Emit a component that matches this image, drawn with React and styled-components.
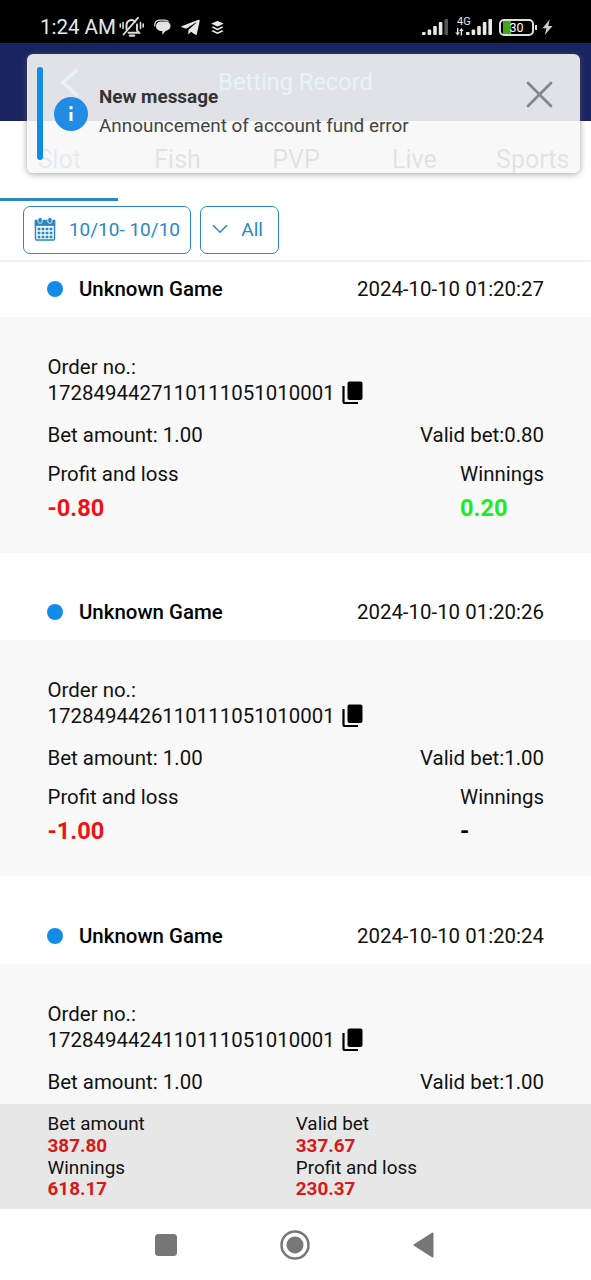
import React from 'react';
import styled, { createGlobalStyle } from 'styled-components';
import { FaBuffer, FaTelegramPlane } from 'react-icons/fa';

const records = [
	{ id: '1728494427110111051010001', time: '2024-10-10 01:20:27', bet: '1.00', valid: '0.80', profit: '-0.80', winnings: '0.20' },
	{ id: '1728494426110111051010001', time: '2024-10-10 01:20:26', bet: '1.00', valid: '1.00', profit: '-1.00', winnings: '-' },
	{ id: '1728494424110111051010001', time: '2024-10-10 01:20:24', bet: '1.00', valid: '1.00' },
];

const totals = [
	{ label: 'Bet amount', value: '387.80' },
	{ label: 'Valid bet', value: '337.67' },
	{ label: 'Winnings', value: '618.17' },
	{ label: 'Profit and loss', value: '230.37' },
];

const tabs = ['Slot', 'Fish', 'PVP', 'Live', 'Sports'];

const MutedBell = () => (
	<svg width='26' height='22' viewBox='0 0 26 22' fill='none' stroke='#ddd' strokeWidth='1.9' strokeLinecap='round'>
		<path d='M7.5 13V9a5 5 0 0 1 8.5-3.5M18 8.5v6l2 2.2H9.5' />
		<path d='M4.5 18.5 19 1.8' />
		<path d='M10.8 19.6h4.4' strokeWidth='2.2' />
		<path d='M4 6.5v6M1.3 8v3M21.5 6.5v6M24.2 8v3' strokeWidth='1.6' />
	</svg>
);

const ChatBubble = () => (
	<svg width='17' height='17' viewBox='0 0 17 17' fill='#e4e4e4'>
		<path d='M.9 7.5C.3 3.5 2.2 1.3 5.5 1.2h5.2c1.7 0 3 .5 3.9 1.5' fill='none' stroke='#ddd' strokeWidth='1.2' />
		<path d='M7 2.6h4c3.5 0 5.5 1.9 5.5 4.5 0 2.8-2 4.5-4.9 4.9L8.3 15.8v-3.7C4.4 12.1 2 10.2 2 7.3c0-2.9 2-4.7 5-4.7Z' />
	</svg>
);

const Signal = ({ dim }) => (
	<svg width='26' height='18' viewBox='0 0 26 18' fill='#e8e8e8'>
		<rect x='0' y='14' width='3.6' height='3' rx='1' />
		<rect x='5.6' y='11.5' width='3.6' height='5.5' rx='1' />
		<rect x='11.2' y='8' width='3.6' height='9' rx='1' />
		<rect x='16.8' y='4' width='3.6' height='13' rx='1' />
		<rect x='22.4' y='1' width='3.6' height='16' rx='1' fill={dim ? '#555' : '#e8e8e8'} />
	</svg>
);

const DataArrows = () => (
	<svg width='9' height='8' viewBox='0 0 9 8' fill='#e8e8e8'>
		<path d='M2 0h1.4v4.5H5L2.7 7.5.3 4.5H2ZM5.7 7.5V3H4.2L6.4 0l2.3 3H7.1v4.5Z' />
	</svg>
);

const Bolt = () => (
	<svg width='11' height='17' viewBox='0 0 11 17' fill='#ccc'>
		<path d='M7.7.5.5 9.2h4L2.8 16l7.7-8.9H6.3Z' />
	</svg>
);

const CalendarIcon = () => (
	<svg width='22' height='24' viewBox='0 0 22 24'>
		<path d='M1.5 3.5h19V22a1 1 0 0 1-1 1h-17a1 1 0 0 1-1-1Z' fill='#fff' stroke='#2a88c4' strokeWidth='1.5' />
		<path d='M.8 3.5h20.4v5.4H.8Z' fill='#2a88c4' />
		<rect x='4' y='.4' width='4.2' height='6' rx='2.1' fill='#2a88c4' stroke='#fff' strokeWidth='.8' />
		<rect x='13.8' y='.4' width='4.2' height='6' rx='2.1' fill='#2a88c4' stroke='#fff' strokeWidth='.8' />
		{[10.7, 14.7, 18.7].map((y) => [3.6, 7.6, 11.6, 15.6].map((x) => <rect key={`${x}-${y}`} x={x} y={y} width='2.8' height='2.6' fill='#2a88c4' />))}
	</svg>
);

const CopyIcon = () => (
	<svg width='21' height='24' viewBox='0 0 21 24'>
		<rect x='5.5' y='.5' width='15' height='18.5' rx='2' />
		<path d='M1.5 5v15.5a1.5 1.5 0 0 0 1.5 1.5h13' fill='none' stroke='#000' strokeWidth='2.2' />
	</svg>
);

const Record = ({ record }) => (
	<article>
		<RecordHead>
			<Dot />
			<GameName>Unknown Game</GameName>
			<time>{record.time}</time>
		</RecordHead>
		<RecordBody>
			<OrderLabel>Order no.:</OrderLabel>
			<OrderLine>
				{record.id}
				<CopyIcon />
			</OrderLine>
			<BetRow>
				<span>Bet amount: {record.bet}</span>
				<span>Valid bet:{record.valid}</span>
			</BetRow>
			{record.profit && (
				<ResultRow>
					<div>
						Profit and loss
						<Amount $color='#f01212'>{record.profit}</Amount>
					</div>
					<div>
						Winnings
						<Amount $color={record.winnings === '-' ? '#000' : '#18ef20'}>{record.winnings}</Amount>
					</div>
				</ResultRow>
			)}
		</RecordBody>
	</article>
);

const App = () => {
	return (
		<Screen>
			<GlobalStyle />
			<StatusBar>
				<Clock>1:24 AM</Clock>
				<Notices>
					<MutedBell />
					<ChatBubble />
					<FaTelegramPlane size={21} />
					<FaBuffer size={15} />
				</Notices>
				<Signal dim />
				<Network>
					<small>4G</small>
					<DataArrows />
				</Network>
				<Signal />
				<Battery>
					<span>30</span>
				</Battery>
				<Bolt />
			</StatusBar>
			<Header>
				<svg width='20' height='29' viewBox='0 0 20 29' fill='none' stroke='#40dcec' strokeWidth='3.5'>
					<path d='M17.5 1.5 3 14.5l14.5 13' />
				</svg>
				<h1>Betting Record</h1>
			</Header>
			<Tabs>
				{tabs.map((tab, i) => (
					<Tab key={tab} $active={i === 0}>
						{tab}
					</Tab>
				))}
			</Tabs>
			<Filters>
				<FilterButton $width='168px' $padding='0 10px 2px'>
					<CalendarIcon />
					<span>10/10- 10/10</span>
				</FilterButton>
				<FilterButton $width='79px' $padding='0 15px 2px 11px'>
					<svg width='16' height='10' viewBox='0 0 16 10' fill='none' stroke='#2a88c4' strokeWidth='1.6'>
						<path d='m1 1.2 7 7 7-7' />
					</svg>
					<span>All</span>
				</FilterButton>
			</Filters>
			<List>
				{records.map((record) => (
					<Record key={record.id} record={record} />
				))}
			</List>
			<Summary>
				{totals.map((item) => (
					<div key={item.label}>
						{item.label}
						<strong>{item.value}</strong>
					</div>
				))}
			</Summary>
			<NavBar>
				<svg width='22' height='22' viewBox='0 0 22 22'>
					<rect width='22' height='22' rx='3.5' fill='#777' />
				</svg>
				<svg width='30' height='30' viewBox='0 0 30 30'>
					<circle cx='15' cy='15' r='13.5' fill='none' stroke='#777' strokeWidth='2.5' />
					<circle cx='15' cy='15' r='8.5' fill='#777' />
				</svg>
				<svg width='21' height='26' viewBox='0 0 21 26'>
					<path d='M19.5 1.5v23L1.5 13Z' fill='#777' stroke='#777' strokeWidth='2' strokeLinejoin='round' />
				</svg>
			</NavBar>
			<Toast>
				<ToastBar />
				<InfoBadge>
					<svg width='34' height='34' viewBox='0 0 34 34'>
						<circle cx='17' cy='17' r='17' fill='#228be6' />
						<path d='M17 9.3v3M17 15v9' stroke='#fff' strokeWidth='3' />
					</svg>
				</InfoBadge>
				<ToastText>
					<strong>New message</strong>
					<p>Announcement of account fund error</p>
				</ToastText>
				<svg width='27' height='27' viewBox='0 0 27 27' stroke='#85868a' strokeWidth='2.8' strokeLinecap='round'>
					<path d='m2 2 23 23M25 2 2 25' />
				</svg>
			</Toast>
		</Screen>
	);
};

const GlobalStyle = createGlobalStyle`
	* {
		box-sizing: border-box;
	}
	body {
		margin: 0;
		background: #fff;
		font-family: Roboto, sans-serif;
		color: #111;
	}
	svg {
		display: block;
		flex-shrink: 0;
	}
`;

const Screen = styled.main`
	position: relative;
	display: flex;
	flex-direction: column;
	width: 591px;
	height: 1280px;
	overflow: hidden;
	background: #fff;
`;

const StatusBar = styled.div`
	display: flex;
	align-items: center;
	flex-shrink: 0;
	height: 43px;
	padding: 11px 38px 0 40px;
	background: #000;
	color: #e8e8e8;
`;

const Clock = styled.span`
	width: 79px;
	font-size: 20.5px;
	white-space: nowrap;
`;

const Notices = styled.div`
	display: flex;
	align-items: center;
	gap: 9px;
	margin-right: auto;
`;

const Network = styled.div`
	display: flex;
	flex-direction: column;
	width: 11px;
	margin: -2px 0 0 7px;

	small {
		padding-left: 2px;
		font-size: 11px;
		line-height: 12px;
		white-space: nowrap;
	}
`;

const Battery = styled.div`
	position: relative;
	width: 35px;
	height: 17px;
	margin: 0 8px 0 7px;
	border: 2px solid #ddd;
	border-radius: 5px;
	background: linear-gradient(90deg, #000 2px, #43a51a 2px 10px, #000 10px);
	font-size: 12.5px;
	line-height: 14px;
	text-align: center;
	color: #fff;

	&::after {
		content: '';
		position: absolute;
		top: 4px;
		right: -5px;
		width: 2px;
		height: 5px;
		background: #ddd;
	}
`;

const Header = styled.header`
	display: grid;
	grid-template-columns: 80px 1fr 80px;
	align-items: center;
	flex-shrink: 0;
	height: 78px;
	background: #192560;

	svg {
		justify-self: end;
	}

	h1 {
		margin: 0;
		font-size: 23.6px;
		font-weight: 400;
		text-align: center;
		color: #40dcec;
	}
`;

const Tabs = styled.nav`
	display: grid;
	grid-template-columns: repeat(5, 118.4px);
	flex-shrink: 0;
	height: 80px;
	overflow: hidden;
`;

const Tab = styled.div`
	display: flex;
	align-items: center;
	justify-content: center;
	border-bottom: 3px solid ${({ $active }) => ($active ? '#2a88c4' : 'transparent')};
	font-size: 25px;
	color: ${({ $active }) => ($active ? '#2a88c4' : '#222')};
`;

const Filters = styled.div`
	display: flex;
	gap: 9px;
	flex-shrink: 0;
	height: 60px;
	padding: 5px 23px;
	border-bottom: 1px solid #eee;
	box-shadow: 0 1px 2px rgba(0, 0, 0, 0.06);
`;

const FilterButton = styled.button`
	display: flex;
	align-items: center;
	justify-content: space-between;
	width: ${({ $width }) => $width};
	height: 48px;
	padding: ${({ $padding }) => $padding};
	border: 1px solid #2a88c4;
	border-radius: 7px;
	background: #fff;
	font-family: inherit;
	font-size: 19px;
	white-space: nowrap;
	color: #2a88c4;
`;

const List = styled.section`
	flex: 1;
	min-height: 0;
	overflow: hidden;
	font-size: 20.45px;
`;

const RecordHead = styled.div`
	display: flex;
	align-items: center;
	height: 56px;
	padding: 0 47px;
`;

const Dot = styled.i`
	width: 16px;
	height: 16px;
	margin-right: 16px;
	border-radius: 50%;
	background: #138be8;
`;

const GameName = styled.b`
	flex: 1;
	font-weight: 500;
	color: #000;
`;

const RecordBody = styled.div`
	height: 235.5px;
	margin-bottom: 31.8px;
	padding: 37px 47px 0 47.5px;
	background: #f8f8f8;
`;

const OrderLabel = styled.div`
	line-height: 26px;
`;

const OrderLine = styled.div`
	display: flex;
	align-items: center;
	gap: 7px;
	line-height: 26px;
`;

const BetRow = styled.div`
	display: flex;
	justify-content: space-between;
	margin-top: 16px;
	line-height: 26px;
`;

const ResultRow = styled.div`
	display: flex;
	justify-content: space-between;
	margin-top: 13px;
	line-height: 26px;
`;

const Amount = styled.strong`
	display: block;
	margin-top: 8px;
	font-size: 23.6px;
	font-weight: 700;
	color: ${({ $color }) => $color};
`;

const Summary = styled.footer`
	display: grid;
	grid-template-columns: 1fr 1fr;
	align-content: start;
	flex-shrink: 0;
	height: 105px;
	padding: 9.3px 47px 0 47.5px;
	background: #e7e7e7;
	font-size: 18.9px;
	line-height: 21.7px;

	strong {
		display: block;
		color: #d91818;
	}
`;

const NavBar = styled.nav`
	display: flex;
	align-items: center;
	justify-content: space-between;
	flex-shrink: 0;
	height: 71px;
	padding: 0 157px 0 155px;
`;

/* floats over the header and the tabs */
const Toast = styled.aside`
	position: absolute;
	top: 54px;
	left: 27px;
	display: flex;
	width: 553px;
	height: 119px;
	padding: 13px 27px 13px 10px;
	border-radius: 6px;
	background: rgba(247, 247, 247, 0.9);
	box-shadow: 0 1px 6px rgba(100, 100, 100, 0.6);

	> svg {
		margin: 14px 0 0 auto;
	}
`;

const ToastBar = styled.i`
	width: 6px;
	height: 93px;
	border-radius: 3px;
	background: #118de4;
`;

const InfoBadge = styled.div`
	margin: 30px 11px 0 11px;
`;

const ToastText = styled.div`
	padding-top: 18px;
	font-size: 18.9px;
	color: #444;

	strong {
		display: block;
		line-height: 24px;
		color: #333;
	}

	p {
		margin: 4px 0 0;
		line-height: 26px;
	}
`;

export default App;
